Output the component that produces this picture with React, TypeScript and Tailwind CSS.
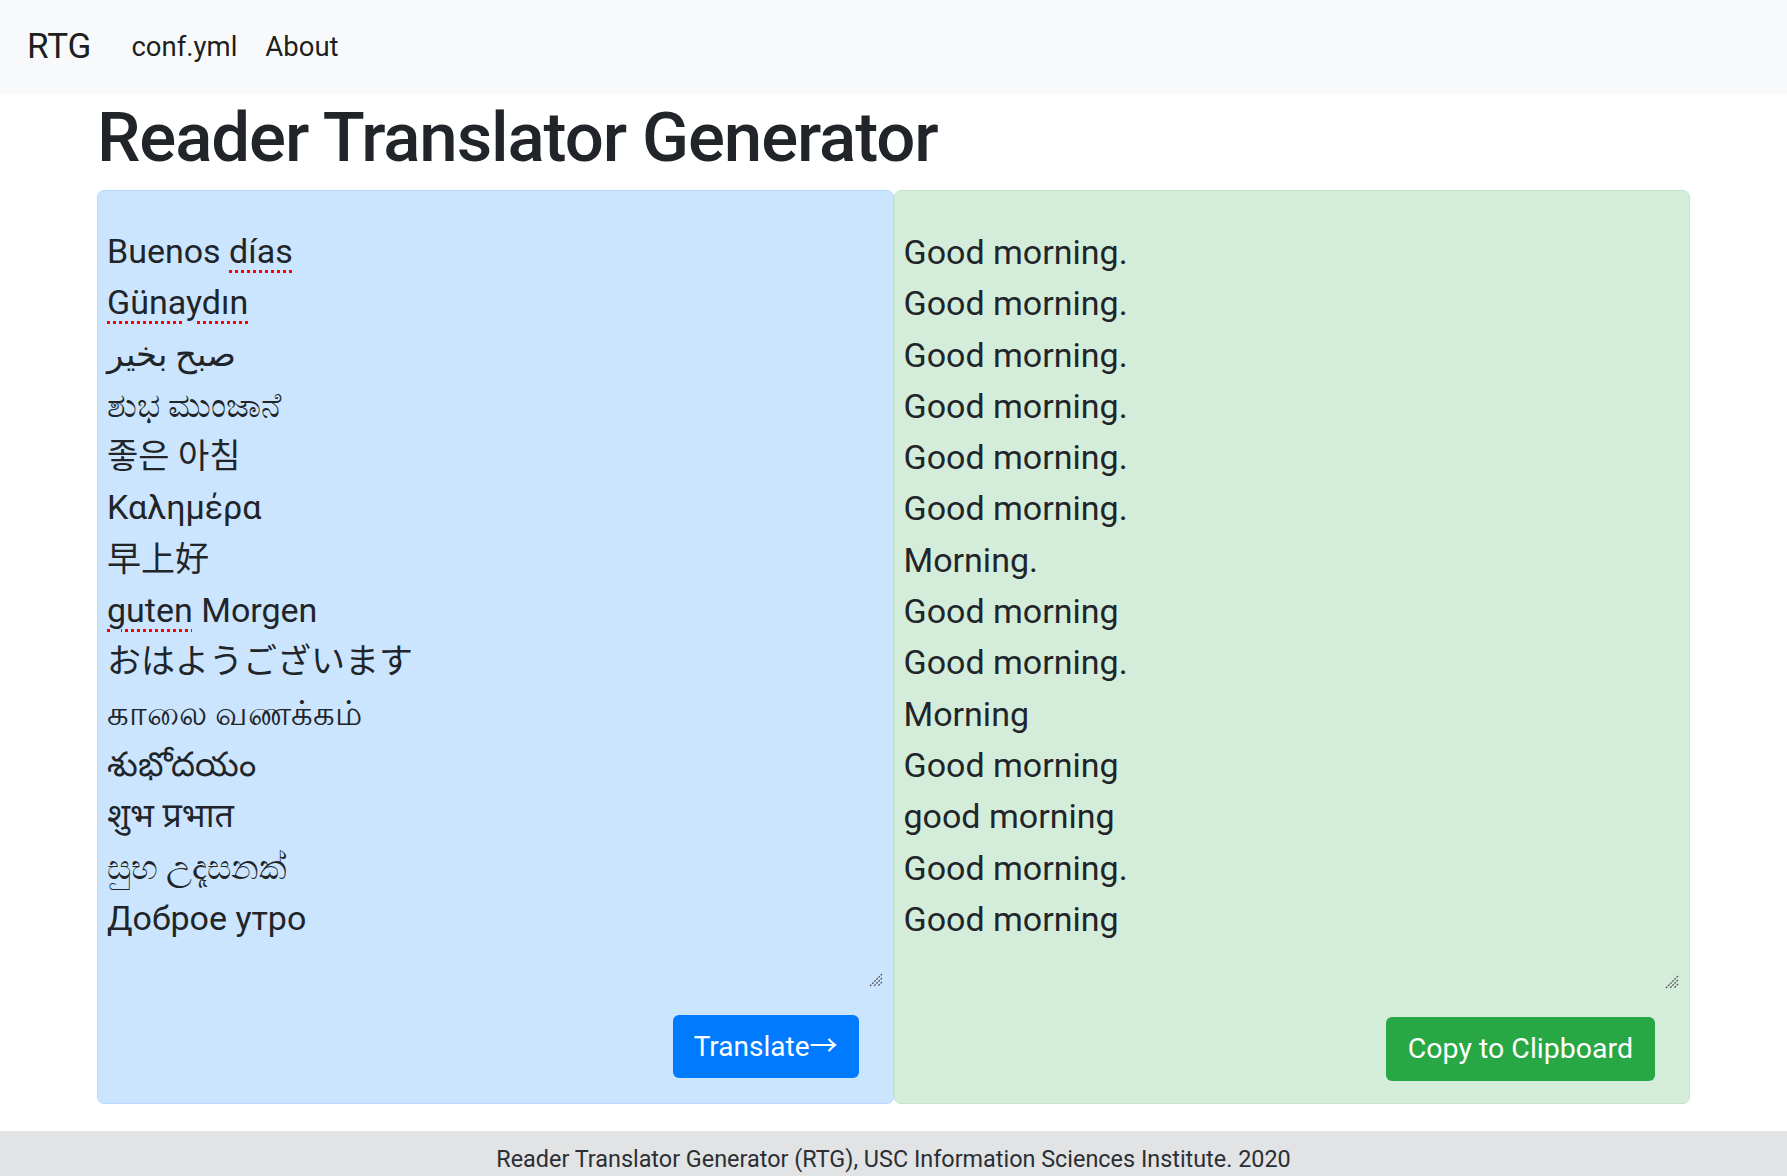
import React from "react";

type Line = { text: string; typo?: string };

const sourceLines: Line[] = [
  { text: "Buenos ", typo: "días" },
  { text: "", typo: "Günaydın" },
  { text: "صبح بخير" },
  { text: "ಶುಭ ಮುಂಜಾನೆ" },
  { text: "좋은 아침" },
  { text: "Καλημέρα" },
  { text: "早上好" },
  { text: " Morgen", typo: "guten" },
  { text: "おはようございます" },
  { text: "காலை வணக்கம்" },
  { text: "శుభోదయం" },
  { text: "शुभ प्रभात" },
  { text: "සුභ උදෑසනක්" },
  { text: "Доброе утро" },
];

const targetLines = [
  "Good morning.",
  "Good morning.",
  "Good morning.",
  "Good morning.",
  "Good morning.",
  "Good morning.",
  "Morning.",
  "Good morning",
  "Good morning.",
  "Morning",
  "Good morning",
  "good morning",
  "Good morning.",
  "Good morning",
];

function Typo({ children }: { children: React.ReactNode }) {
  return (
    <span className="underline decoration-[#ff0000] decoration-dotted decoration-[3px] underline-offset-[7px]">
      {children}
    </span>
  );
}

function ResizeHandle() {
  return (
    <svg width="14" height="14" viewBox="0 0 14 14" className="absolute bottom-[2px] right-[10px]">
      <line x1="13" y1="1" x2="1" y2="13" stroke="#555" strokeWidth="1.3" strokeDasharray="2 1" />
      <line x1="13" y1="5" x2="5" y2="13" stroke="#555" strokeWidth="1.3" strokeDasharray="2 1" />
      <line x1="13" y1="9" x2="9" y2="13" stroke="#555" strokeWidth="1.3" strokeDasharray="2 1" />
    </svg>
  );
}

export default function App() {
  return (
    <div className="min-h-screen bg-white font-['Roboto','Noto_Sans','Noto_Sans_CJK_JP',sans-serif] text-[#212529]">
      <nav className="flex h-[94px] items-center bg-[#f8f9fa] px-[27px]">
        <a href="#" className="mr-[26px] text-[35px] text-black/90">
          RTG
        </a>
        <a href="#" className="px-[14px] text-[27.5px] text-black/90">
          conf.yml
        </a>
        <a href="#" className="px-[14px] text-[27.5px] text-black/90">
          About
        </a>
      </nav>

      <main className="mx-auto w-[1593px]">
        <h1 className="pt-[4px] pb-[12px] text-[69px] font-medium leading-[80px] tracking-[-0.016em]">
          Reader Translator Generator
        </h1>

        <div className="grid grid-cols-2">
          <section className="flex flex-col rounded-[7px] border border-[#b8daff] bg-[#cce5ff]">
            <div className="relative h-[798px] pl-[9px] pt-[35px] text-[34px] leading-[51.3px]">
              {sourceLines.map((l, i) => (
                <div key={i} className="whitespace-pre">
                  {i === 7 ? (
                    <>
                      <Typo>{l.typo}</Typo>
                      {l.text}
                    </>
                  ) : (
                    <>
                      {l.text}
                      {l.typo ? <Typo>{l.typo}</Typo> : null}
                    </>
                  )}
                </div>
              ))}
              <ResizeHandle />
            </div>
            <div className="flex justify-end px-[34px] pt-[26px] pb-[24px]">
              <button className="h-[63px] rounded-[6px] bg-[#007bff] px-[21px] text-[28px] text-white">
                Translate→
              </button>
            </div>
          </section>

          <section className="flex flex-col rounded-[7px] border border-[#c3e6cb] bg-[#d4edda]">
            <div className="relative h-[800px] pl-[9px] pt-[36px] text-[34px] leading-[51.3px]">
              {targetLines.map((t, i) => (
                <div key={i}>{t}</div>
              ))}
              <ResizeHandle />
            </div>
            <div className="flex justify-end px-[34px] pt-[26px] pb-[22px]">
              <button className="h-[64px] rounded-[6px] bg-[#28a745] px-[22px] text-[28.5px] text-white">
                Copy to Clipboard
              </button>
            </div>
          </section>
        </div>
      </main>

      <footer className="mt-[27px] bg-[#e2e3e5] pt-[11px] pb-[30px] text-center text-[23.4px] text-[#2b2f33]">
        Reader Translator Generator (RTG), USC Information Sciences Institute. 2020
      </footer>
    </div>
  );
}
